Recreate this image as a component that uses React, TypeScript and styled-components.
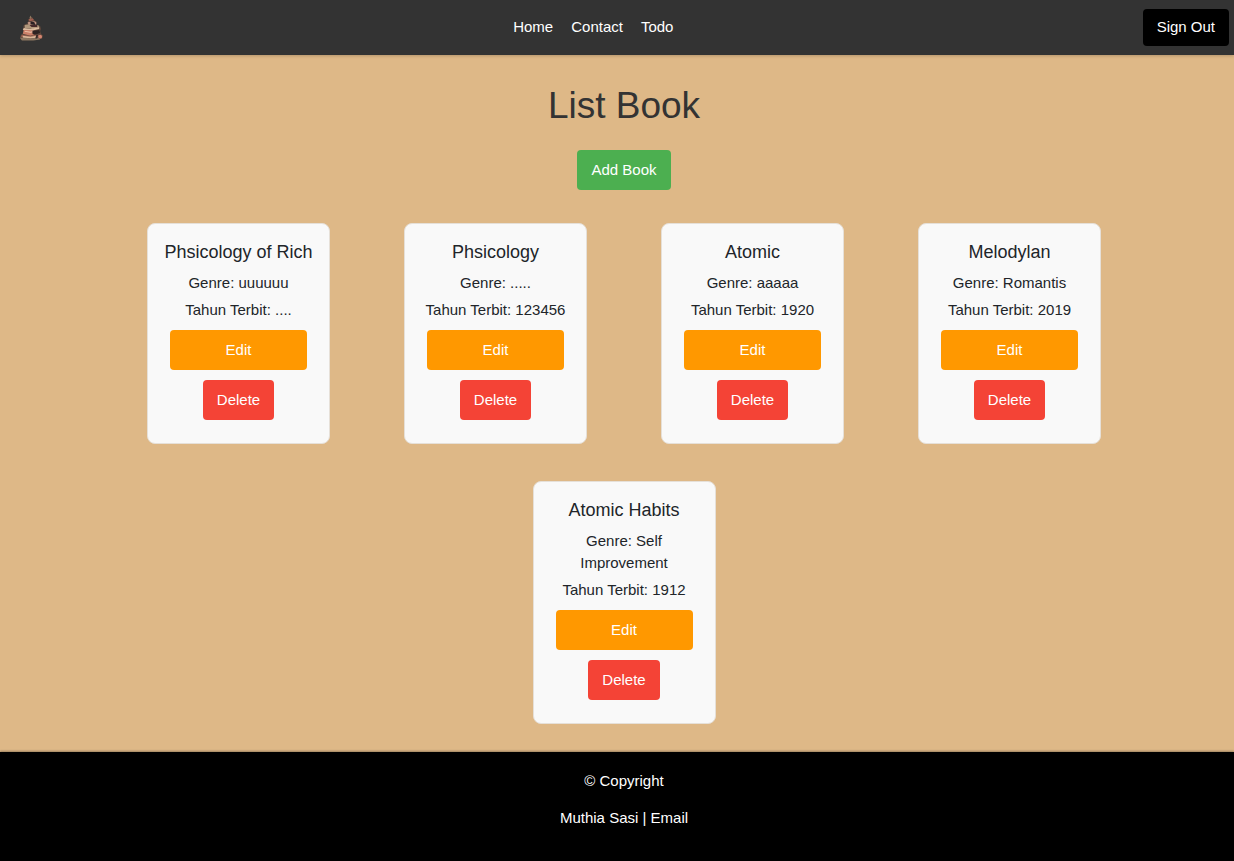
import React from "react";
import styled, { createGlobalStyle } from "styled-components";

const GlobalStyle = createGlobalStyle`
  *, *::before, *::after { box-sizing: border-box; }
  body {
    margin: 0;
    background: #deb887;
    color: #212529;
    font-family: "Liberation Sans", Arial, sans-serif;
    font-size: 15px;
    line-height: 22px;
  }
  h1, h2, p { margin: 0; font-weight: 400; }
`;

const Page = styled.div`
  display: flex;
  flex-direction: column;
  min-height: 100vh;
`;

const Navbar = styled.header`
  display: flex;
  align-items: center;
  justify-content: space-between;
  padding: 9px 5px 9px 18px;
  background: #333;
  box-shadow: 0 1px 3px rgba(0, 0, 0, 0.2);
`;

const Brand = styled.a`
  display: flex;
`;

const NavLinks = styled.nav`
  display: flex;
  gap: 18px;
  padding-bottom: 1px;
`;

const TextLink = styled.a`
  color: #fff;
  text-decoration: none;
`;

const Button = styled.button<{ $color: string }>`
  padding: 9px 14px;
  border: 0;
  border-radius: 4px;
  background: ${({ $color }) => $color};
  color: #fff;
  font: inherit;
  cursor: pointer;
`;

const SignOutButton = styled(Button)`
  padding: 7px 14px 8px;
`;

const EditButton = styled(Button)`
  align-self: stretch;
  margin: 9px 8px 10px;
`;

const Main = styled.main`
  display: flex;
  flex: 1;
  flex-direction: column;
  align-items: center;
  padding: 29px 0 28px 14px;
`;

const Title = styled.h1`
  margin-bottom: 22px;
  color: #333;
  font-size: 37px;
  line-height: 44px;
`;

const BookList = styled.section`
  display: flex;
  flex-wrap: wrap;
  justify-content: center;
  align-items: flex-start;
  gap: 37px 74px;
  width: 100%;
  max-width: 1040px;
  margin-top: 33px;
`;

const Card = styled.article`
  display: flex;
  flex-direction: column;
  align-items: center;
  width: 183px;
  padding: 17px 14px 23px;
  border: 1px solid #e6e0d8;
  border-radius: 8px;
  background: #f9f9f9;
  text-align: center;
`;

const BookTitle = styled.h2`
  margin-bottom: 9px;
  font-size: 18px;
  line-height: 22px;
`;

const Detail = styled.p`
  & + & { margin-top: 5px; }
`;

const Footer = styled.footer`
  display: flex;
  flex-direction: column;
  align-items: center;
  gap: 15px;
  padding: 18px 0 32px 14px;
  background: #000;
  color: #fff;
  box-shadow: 0 -1px 2px rgba(0, 0, 0, 0.3);
`;

const books = [
  { title: "Phsicology of Rich", genre: "uuuuuu", year: "...." },
  { title: "Phsicology", genre: ".....", year: "123456" },
  { title: "Atomic", genre: "aaaaa", year: "1920" },
  { title: "Melodylan", genre: "Romantis", year: "2019" },
  { title: "Atomic Habits", genre: "Self Improvement", year: "1912" },
];

function BookTreeLogo() {
  return (
    <svg width="26" height="28" viewBox="0 0 27 28" aria-hidden="true">
      <path d="M13 2l2 1 1 3 3 1v4l4 1 1 3-1 2 1 3 2 2-1 3-3 1H4l-2-2 1-3 3-2-1-4 1-4 4-2 1-4z" fill="#5c463b" />
      <path d="M13 1l1 2-1 2-1-2z" fill="#8f7a62" />
      <path d="M11 5l4-1 2 2-5 1z" fill="#a05f50" />
      <path d="M10 8l7-1 2 1v2l-8 1z" fill="#c09584" />
      <path d="M13 7l4 1 1 3-5-1z" fill="#2a2024" />
      <path d="M7 11l5-1 2 2 7-1 1 2-7 2-8-1z" fill="#b0977b" />
      <path d="M12 11l8 0 0 2-6 0z" fill="#45282a" />
      <path d="M6 14l7 1 9-2v2l-9 2-8-1z" fill="#dcbda0" />
      <path d="M6 16l6 0 5 1 1 3-5 2-8-2z" fill="#cb7f68" />
      <path d="M7 17l6 1 4-1v1l-4 1-6-1z" fill="#edc9b0" />
      <path d="M15 17l7-1 1 3-5 2-3-1z" fill="#2f2322" />
      <path d="M4 21l8 1 6-1 4 0-1 2-9 1-9-1z" fill="#99604f" />
      <path d="M5 22l8 1 6-1v2l-6 1-8-1z" fill="#dab698" />
      <path d="M2 24l6 0 5 1 8-1 2 2-7 1H4z" fill="#8b7661" />
      <path d="M19 21l2 0-1 4-2 0z" fill="#382b28" />
      <circle cx="23" cy="23" r="2" fill="#d48570" />
    </svg>
  );
}

export default function App() {
  return (
    <Page>
      <GlobalStyle />
      <Navbar>
        <Brand href="#" aria-label="Book list"><BookTreeLogo /></Brand>
        <NavLinks>
          <TextLink href="#home">Home</TextLink>
          <TextLink href="#contact">Contact</TextLink>
          <TextLink href="#todo">Todo</TextLink>
        </NavLinks>
        <SignOutButton type="button" $color="#000">Sign Out</SignOutButton>
      </Navbar>
      <Main>
        <Title>List Book</Title>
        <Button type="button" $color="#4caf50">Add Book</Button>
        <BookList>
          {books.map((book) => (
            <Card key={book.title}>
              <BookTitle>{book.title}</BookTitle>
              <Detail>{`Genre: ${book.genre}`}</Detail>
              <Detail>{`Tahun Terbit: ${book.year}`}</Detail>
              <EditButton type="button" $color="#ff9800">Edit</EditButton>
              <Button type="button" $color="#f44336">Delete</Button>
            </Card>
          ))}
        </BookList>
      </Main>
      <Footer>
        <p>© Copyright</p>
        <p>Muthia Sasi | <TextLink href="#email">Email</TextLink></p>
      </Footer>
    </Page>
  );
}
